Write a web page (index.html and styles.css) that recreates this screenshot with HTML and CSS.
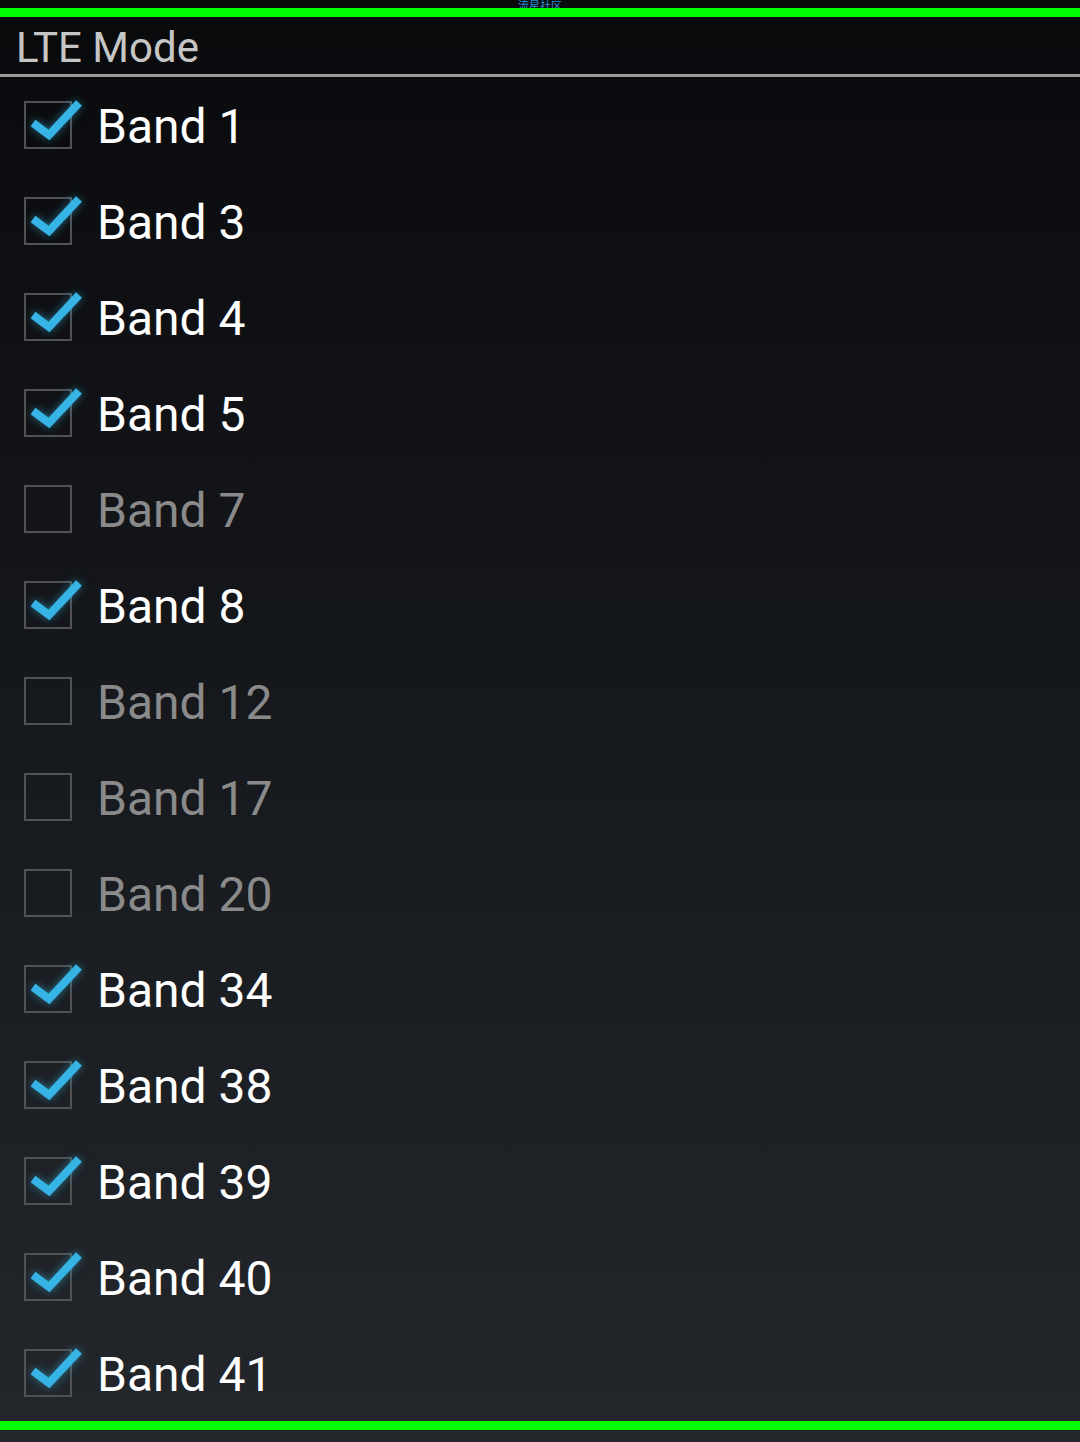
FILE: index.html
```html
<!DOCTYPE html>
<html lang="zh-CN">
<head>
  <meta charset="UTF-8">
  <title>LTE Mode</title>
  <link rel="stylesheet" href="styles.css">
</head>
<body>
  <div class="screen">
    <div class="status">流星社区</div>
    <div class="bar"></div>
    <div class="title">LTE Mode</div>
    <div class="divider"></div>

    <ul class="bands">
      <li class="band on"><svg class="box" viewBox="0 0 48 48"><rect x="1" y="1" width="46" height="46"/><path d="M9 22 L25 34 L55 2"/></svg><span>Band 1</span></li>
      <li class="band on"><svg class="box" viewBox="0 0 48 48"><rect x="1" y="1" width="46" height="46"/><path d="M9 22 L25 34 L55 2"/></svg><span>Band 3</span></li>
      <li class="band on"><svg class="box" viewBox="0 0 48 48"><rect x="1" y="1" width="46" height="46"/><path d="M9 22 L25 34 L55 2"/></svg><span>Band 4</span></li>
      <li class="band on"><svg class="box" viewBox="0 0 48 48"><rect x="1" y="1" width="46" height="46"/><path d="M9 22 L25 34 L55 2"/></svg><span>Band 5</span></li>
      <li class="band"><svg class="box" viewBox="0 0 48 48"><rect x="1" y="1" width="46" height="46"/></svg><span>Band 7</span></li>
      <li class="band on"><svg class="box" viewBox="0 0 48 48"><rect x="1" y="1" width="46" height="46"/><path d="M9 22 L25 34 L55 2"/></svg><span>Band 8</span></li>
      <li class="band"><svg class="box" viewBox="0 0 48 48"><rect x="1" y="1" width="46" height="46"/></svg><span>Band 12</span></li>
      <li class="band"><svg class="box" viewBox="0 0 48 48"><rect x="1" y="1" width="46" height="46"/></svg><span>Band 17</span></li>
      <li class="band"><svg class="box" viewBox="0 0 48 48"><rect x="1" y="1" width="46" height="46"/></svg><span>Band 20</span></li>
      <li class="band on"><svg class="box" viewBox="0 0 48 48"><rect x="1" y="1" width="46" height="46"/><path d="M9 22 L25 34 L55 2"/></svg><span>Band 34</span></li>
      <li class="band on"><svg class="box" viewBox="0 0 48 48"><rect x="1" y="1" width="46" height="46"/><path d="M9 22 L25 34 L55 2"/></svg><span>Band 38</span></li>
      <li class="band on"><svg class="box" viewBox="0 0 48 48"><rect x="1" y="1" width="46" height="46"/><path d="M9 22 L25 34 L55 2"/></svg><span>Band 39</span></li>
      <li class="band on"><svg class="box" viewBox="0 0 48 48"><rect x="1" y="1" width="46" height="46"/><path d="M9 22 L25 34 L55 2"/></svg><span>Band 40</span></li>
      <li class="band on"><svg class="box" viewBox="0 0 48 48"><rect x="1" y="1" width="46" height="46"/><path d="M9 22 L25 34 L55 2"/></svg><span>Band 41</span></li>
    </ul>

    <div class="bar"></div>
  </div>
</body>
</html>
```

FILE: styles.css
```css
html, body {
  margin: 0;
  padding: 0;
  background: #23272c;
}
body {
  font-family: Roboto, "Noto Sans CJK SC", sans-serif;
}
.screen {
  width: 1080px;
  height: 1442px;
  overflow: hidden;
  background: linear-gradient(to bottom, #090a0c 0%, #121418 35%, #1b1e22 70%, #23272c 100%);
}
.status {
  height: 8px;
  overflow: hidden;
  text-align: center;
  color: #2f8fd8;
  font-size: 11px;
  line-height: 13px;
}
.bar {
  height: 9px;
  background: #00ff00;
}
.title {
  height: 57px;
  padding-left: 16px;
  color: #c6c6c6;
  font-size: 42px;
  line-height: 62px;
  box-sizing: border-box;
}
.divider {
  height: 3px;
  background: #9c9c9c;
}
.bands {
  list-style: none;
  margin: 0;
  padding: 0;
}
.band {
  height: 96px;
  display: flex;
  align-items: center;
  padding-left: 24px;
  color: #8a8a8a;
  font-size: 48px;
}
.band span {
  padding-top: 3px;
}
.band.on {
  color: #fff;
}
.box {
  width: 48px;
  height: 48px;
  margin-right: 25px;
  overflow: visible;
  flex: none;
}
.box rect {
  fill: none;
  stroke: #505254;
  stroke-width: 2;
}
.box path {
  fill: none;
  stroke: #36b4e6;
  stroke-width: 8;
  stroke-linejoin: miter;
  filter: drop-shadow(0 0 4px rgba(51, 181, 229, 0.55));
}
```
